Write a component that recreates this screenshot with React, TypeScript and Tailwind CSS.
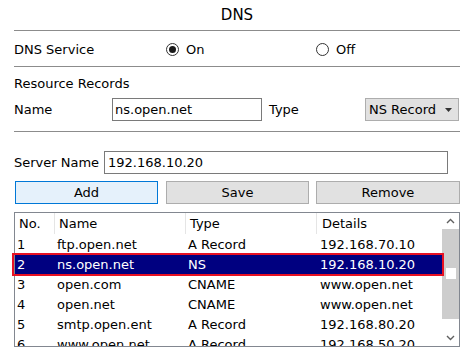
import React from "react";

const rows = [
  ["1", "ftp.open.net", "A Record", "192.168.70.10"],
  ["2", "ns.open.net", "NS", "192.168.10.20"],
  ["3", "open.com", "CNAME", "www.open.net"],
  ["4", "open.net", "CNAME", "www.open.net"],
  ["5", "smtp.open.ent", "A Record", "192.168.80.20"],
  ["6", "www.open.net", "A Record", "192.168.50.20"],
];

function Radio({ checked }: { checked: boolean }) {
  return (
    <span className="w-[13px] h-[13px] rounded-full border border-[#333333] bg-white flex items-center justify-center">
      {checked && <span className="w-[7px] h-[7px] rounded-full bg-[#1a1a1a]" />}
    </span>
  );
}

function Chevron({ up }: { up: boolean }) {
  return (
    <svg width="9" height="6" viewBox="0 0 9 6">
      <polyline
        points={up ? "1,5 4.5,1.5 8,5" : "1,1 4.5,4.5 8,1"}
        fill="none"
        stroke="#606060"
        strokeWidth="1.4"
      />
    </svg>
  );
}

export default function App() {
  return (
    <div className="w-[466px] h-[353px] bg-white overflow-hidden text-[13px] text-black font-['DejaVu_Sans',sans-serif] pl-[14px] pr-[6px] leading-[15px]">
      <div className="h-[30px] flex items-center justify-center text-[15px] pt-[1px]">DNS</div>
      <div className="h-px bg-[#8c8c8c]" />
      <div className="h-[35px] flex items-center pt-[2px]">
        <span className="w-[152px]">DNS Service</span>
        <div className="w-[150px] flex items-center gap-[7px]">
          <Radio checked />
          <span>On</span>
        </div>
        <div className="flex items-center gap-[7px]">
          <Radio checked={false} />
          <span>Off</span>
        </div>
      </div>
      <div className="h-px bg-[#8c8c8c]" />
      <div className="h-[31px] flex items-center pt-[1px]">Resource Records</div>
      <div className="h-[23px] flex items-center">
        <span className="w-[98px]">Name</span>
        <div className="w-[150px] h-[23px] border border-[#7a7a7a] flex items-center px-[2px]">ns.open.net</div>
        <span className="ml-[7px] w-[96px]">Type</span>
        <div className="w-[94px] h-[23px] border border-[#adadad] bg-[#e1e1e1] flex items-center pl-[3px] pr-[6px]">
          <span className="flex-1">NS Record</span>
          <svg width="7" height="4" viewBox="0 0 7 4">
            <polygon points="0,0 7,0 3.5,4" fill="#333333" />
          </svg>
        </div>
      </div>
      <div className="h-px bg-[#8c8c8c] mt-[10px]" />
      <div className="h-[23px] flex items-center mt-[19px]">
        <span className="w-[90px]">Server Name</span>
        <div className="w-[344px] h-[23px] border border-[#7a7a7a] flex items-center px-[3px]">192.168.10.20</div>
      </div>
      <div className="h-[23px] flex mt-[7px] pl-px">
        <div className="w-[143px] h-[23px] border border-[#0078d7] bg-[#e5f1fb] flex items-center justify-center">Add</div>
        <div className="w-[143px] h-[23px] ml-[8px] border border-[#adadad] bg-[#e1e1e1] flex items-center justify-center">Save</div>
        <div className="w-[144px] h-[23px] ml-[7px] border border-[#adadad] bg-[#e1e1e1] flex items-center justify-center">Remove</div>
      </div>
      <div className="relative mt-[8px] w-[446px]">
        <div className="h-[135px] border border-[#828790] flex overflow-hidden">
          <div className="flex-1 flex flex-col">
            <div className="h-[21px] flex items-center shrink-0">
              <div className="w-[40px] h-full flex items-center pl-[4px] border-r border-[#e5e5e5]">No.</div>
              <div className="w-[131px] h-full flex items-center pl-[4px] border-r border-[#e5e5e5]">Name</div>
              <div className="w-[131px] h-full flex items-center pl-[4px] border-r border-[#e5e5e5]">Type</div>
              <div className="flex-1 h-full flex items-center pl-[5px]">Details</div>
            </div>
            {rows.map((r, i) => {
              const sel = i === 1;
              return (
                <div
                  key={i}
                  className={
                    "h-[20px] shrink-0 flex items-center " +
                    (sel ? "bg-[#000080] text-white" : "")
                  }
                >
                  <div className="w-[40px] pl-[2px]">{r[0]}</div>
                  <div className="w-[131px] pl-[2px]">{r[1]}</div>
                  <div className="w-[131px] pl-[2px]">{r[2]}</div>
                  <div className="flex-1 pl-[3px]">{r[3]}</div>
                </div>
              );
            })}
          </div>
          <div className="w-[17px] flex flex-col bg-white">
            <div className="h-[16px] flex items-center justify-center">
              <Chevron up />
            </div>
            <div className="h-[90px] bg-[#cdcdcd] pt-[39px] pl-[4px]">
              <div className="w-[10px] h-[11px] bg-white" />
            </div>
            <div className="flex-1 flex items-start justify-center pt-[16px]">
              <Chevron up={false} />
            </div>
          </div>
        </div>
        <div className="absolute left-[-2px] top-[41px] w-[432px] h-[23px] border-2 border-[#e81123] pointer-events-none" />
      </div>
    </div>
  );
}
